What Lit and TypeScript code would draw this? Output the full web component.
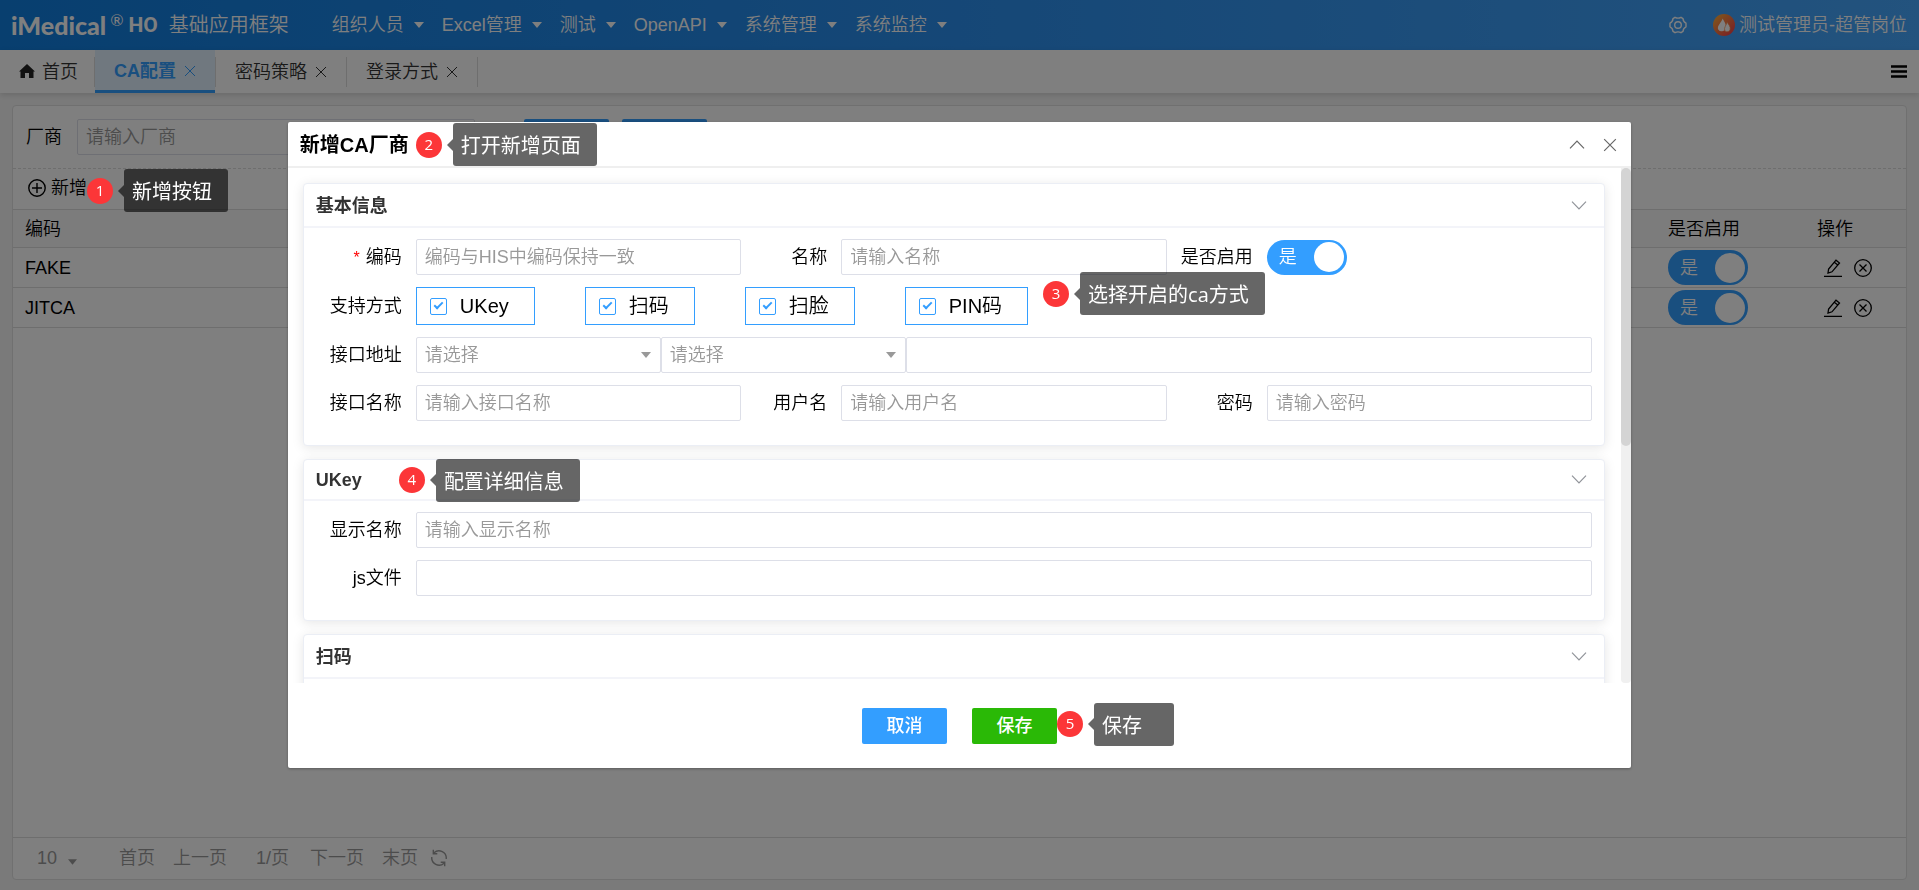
import { LitElement, html, css, nothing } from "lit";
import { customElement, property, state } from "lit/decorators.js";
import { classMap } from "lit/directives/class-map.js";

const caret = html`<svg class="caret" viewBox="0 0 10 6" aria-hidden="true"><path d="M0 0h10L5 6z" fill="currentColor"/></svg>`;
const cross = html`<svg class="cross" viewBox="0 0 12 12" aria-hidden="true"><path d="M1 1l10 10M11 1L1 11" stroke="currentColor" fill="none"/></svg>`;
const chevron = (up: boolean) => html`<svg class="chevron" viewBox="0 0 16 9" aria-hidden="true">
  <path d=${up ? "M1 8.3L8 1.2l7 7.1" : "M1 .7l7 7.1L15 .7"} stroke="currentColor" stroke-width="1.2" fill="none"/></svg>`;

@customElement("step-marker")
export class StepMarker extends LitElement {
  @property({ type: Number }) step = 1;
  @property() text = "";

  static styles = css`
    :host { position: absolute; z-index: 20; display: flex; align-items: center; pointer-events: none; }
    .badge {
      flex: none; width: 26px; height: 26px; border-radius: 50%; background: #fc3638; color: #fff;
      font: 15px/24px "Open Sans", "Noto Sans", sans-serif; text-align: center;
    }
    .tip {
      position: relative; margin-left: 11px; box-sizing: border-box; min-width: 80px; padding: 9px 16px 6px 8px;
      border-radius: 3px; background: rgba(0, 0, 0, 0.6); color: #fff; white-space: nowrap; text-align: left;
      font: 400 20px/28px "Open Sans", "Noto Sans CJK SC", sans-serif;
    }
    .tip::before {
      content: ""; position: absolute; right: 100%; top: 50%; margin-top: -6px;
      border: solid transparent; border-width: 6px 6px 6px 0; border-right-color: rgba(0, 0, 0, 0.6);
    }
  `;

  render() {
    return html`<span class="badge">${this.step}</span><span class="tip">${this.text}</span>`;
  }
}

interface Vendor { code: string; enabled: boolean; }

@customElement("app-root")
export class AppRoot extends LitElement {
  @state() private vendors: Vendor[] = [
    { code: "FAKE", enabled: true },
    { code: "JITCA", enabled: true },
  ];
  private menus = ["组织人员", "Excel管理", "测试", "OpenAPI", "系统管理", "系统监控"];
  private tabs = ["CA配置", "密码策略", "登录方式"];
  private modes = ["UKey", "扫码", "扫脸", "PIN码"];

  static styles = css`
    :host {
      display: flex; flex-direction: column; box-sizing: border-box; min-height: 100vh;
      background: #f5f5f5; color: #000;
      font: 350 18px/24px "Liberation Sans", "Noto Sans CJK SC", sans-serif;
    }
    *, *::before, *::after { box-sizing: border-box; }
    button, input, select { margin: 0; font: inherit; color: inherit; }
    button { padding: 0; border: 0; background: none; white-space: nowrap; cursor: pointer; }
    a { color: inherit; text-decoration: none; }
    svg { display: block; flex: none; }
    .caret { width: 10px; height: 6px; }
    .cross { width: 12px; height: 12px; }
    .chevron { width: 16px; height: 9px; }

    .topbar {
      display: flex; align-items: center; height: 50px; padding: 0 12px 0 11px; color: #fff;
      background: linear-gradient(90deg, #107edf 0%, #2b8fee 50%, #46a6fc 100%);
    }
    .brand { display: flex; align-items: center; }
    .logo { font: 900 25px/28px Lato, sans-serif; }
    .reg { align-self: flex-start; margin: 0 5px 0 4px; font: 16px/18px Lato, sans-serif; }
    .ho { font: 700 21px/28px Roboto, sans-serif; }
    .product { margin-left: 11px; font-size: 20px; }
    .menus { display: flex; align-items: center; gap: 18px; margin-left: 43px; }
    .menu { display: flex; align-items: center; gap: 10px; }
    .account { display: flex; align-items: center; gap: 4px; margin-left: auto; white-space: nowrap; }
    .gear { width: 18px; height: 18px; margin-right: 22px; }
    .avatar { width: 22px; height: 22px; }

    .tabbar {
      display: flex; align-items: center; height: 43px; padding-right: 12px; background: #fff;
      box-shadow: 0 2px 6px rgba(0, 0, 0, 0.14);
    }
    .tab { display: flex; align-items: center; gap: 8px; height: 43px; color: #333; padding: 0 19px; }
    .tab.active { color: #339eff; font-weight: 700; background: #e1f0ff; border-bottom: 3px solid #339eff; padding-top: 2px; }
    .tab.home { padding: 0 16px 0 19px; gap: 7px; }
    .tabbar .split { width: 1px; height: 30px; background: #ddd; }
    .home svg { width: 16px; height: 15px; color: #222; }
    .burger { margin-left: auto; }
    .burger svg { width: 16px; height: 13px; }

    .panel {
      flex: 1; display: flex; flex-direction: column; margin: 12px 12px 10px;
      border: 1px solid #e0e0e0; border-radius: 4px; background: #fff;
    }
    .search { display: flex; align-items: center; height: 63px; padding: 0 13px; border-bottom: 1px dashed #ddd; }
    .search .field { width: 398px; margin: 0 49px 0 15px; }
    .search .primary { margin-right: 13px; }
    .tools { display: flex; align-items: center; height: 40px; padding: 0 15px 2px; }
    .add { position: relative; display: flex; align-items: center; gap: 5px; }
    .add > svg { width: 18px; height: 18px; }
    .add step-marker { left: 100%; top: -7px; }

    table { width: 100%; border-collapse: collapse; }
    th { height: 38px; padding: 0 12px; background: #f9f9f9; font-weight: inherit; text-align: left; }
    td { height: 40px; padding: 0 12px; }
    th, td { border: solid #ddd; border-width: 1px 0; }
    .col-on { width: 149px; }
    .col-act { width: 101px; }
    td.acts { padding-left: 19px; }
    .row-acts { display: flex; align-items: center; gap: 12px; }
    .row-acts svg { width: 18px; height: 18px; }

    .pager {
      display: flex; align-items: center; height: 42px; margin-top: auto; padding: 0 24px 2px;
      border-top: 1px solid #ddd; color: #999;
    }
    .pager .size { display: grid; align-items: center; width: 40px; margin-right: 42px; }
    .pager select { grid-area: 1 / 1; width: 40px; padding: 0; border: 0; outline: 0; appearance: none; background: none; color: #999; }
    .pager .size .caret { grid-area: 1 / 1; justify-self: end; margin-top: 8px; width: 9px; }
    .pager button { margin-right: 18px; }
    .pager .now { margin: 0 21px 0 11px; }
    .pager .refresh { margin: 0 0 0 -6px; }
    .refresh svg { width: 18px; height: 18px; }

    .switch {
      display: inline-flex; align-items: center; justify-content: space-between; width: 80px; height: 35px;
      padding: 0 3px 0 12px; border-radius: 18px; background: #339eff; color: #fff; vertical-align: middle;
    }
    .switch input { appearance: none; width: 30px; height: 30px; border-radius: 50%; background: #fff; }

    .field {
      width: 100%; min-width: 0; height: 36px; padding: 0 8px; border: 1px solid #dddfe8; border-radius: 2px;
      outline: 0; background: #fff;
    }
    .field::placeholder { color: #999; opacity: 1; }
    .primary, .success { width: 85px; height: 36px; border-radius: 2px; background: #339eff; color: #fff; font-weight: 500; }
    .success { background: #2ab906; }

    .mask {
      position: fixed; inset: 0; z-index: 10; display: flex; align-items: center; justify-content: center;
      background: rgba(0, 0, 0, 0.5);
    }
    .dialog {
      display: flex; flex-direction: column; width: 70%; height: calc(100vh - 244px); border-radius: 2px; background: #fff;
      box-shadow: 0 1px 3px rgba(0, 0, 0, 0.3);
    }
    .dialog-head {
      display: flex; align-items: center; gap: 18px; height: 46px; padding: 1px 14px 0 12px; border-bottom: 2px solid #efefef; color: #666;
    }
    .dialog-title { position: relative; display: flex; align-items: center; margin: 0 auto 0 0; color: #000; font: inherit; font-size: 20px; font-weight: 700; }
    .dialog-title step-marker { left: calc(100% + 7px); }
    .dialog-head .cross { width: 14px; height: 14px; }
    .scroll { display: flex; flex: 1; min-height: 0; }
    .scroll-body { flex: 1; min-width: 0; overflow: hidden; padding: 15px 16px 0 15px; }
    .scroll-track { width: 10px; border-radius: 0 0 4px 4px; background: #f0f0f0; }
    .scroll-thumb { height: 54%; border-radius: 5px; background: #d4d4d4; }
    .card {
      margin-bottom: 13px; border: 1px solid #ebeef5; border-radius: 4px; background: #fff;
      box-shadow: 0 2px 12px rgba(0, 0, 0, 0.1);
    }
    .card-head {
      display: flex; align-items: center; justify-content: space-between; height: 44px; padding: 0 17px 0 12px;
      border-bottom: 2px solid #f3f4f9; color: #909399;
    }
    .card-head.slim { height: 41px; }
    .card-head h3 { position: relative; display: flex; align-items: center; margin: 0; padding-top: 1px; font: inherit; font-weight: 700; color: #333; }
    .card-head step-marker { left: calc(100% + 37px); }
    .form { display: grid; grid-template-columns: repeat(3, 1fr); row-gap: 12px; padding: 11px 12px 24px; }
    .item { display: flex; align-items: center; min-width: 0; }
    .wide { grid-column: 1 / -1; }
    .caption { flex: none; width: 100px; padding-right: 14px; text-align: right; white-space: nowrap; }
    .required::before { content: "*"; margin-right: 6px; color: #f00; font-size: 16px; }
    .modes { position: relative; display: flex; gap: 50px; }
    .modes step-marker { left: calc(100% + 15px); top: -15px; }
    .mode {
      display: flex; align-items: center; height: 38px; padding: 0 25px 0 13px; gap: 13px; border: 1px solid #339eff; font-size: 20px;
      white-space: nowrap;
    }
    .mode input {
      appearance: none; display: grid; place-items: center; width: 17px; height: 17px; border: 1px solid #339eff; border-radius: 2px;
    }
    .mode input::after {
      content: ""; width: 9px; height: 5px; margin-top: -3px; border: solid #339eff; border-width: 0 0 2px 2px; transform: rotate(-45deg);
    }
    .pick { display: grid; flex: none; width: 245px; align-items: center; color: #999; }
    .pick .field { grid-area: 1 / 1; appearance: none; color: #999; }
    .pick .caret { grid-area: 1 / 1; justify-self: end; margin-right: 10px; pointer-events: none; }
    .dialog-foot { display: flex; align-items: center; justify-content: center; gap: 25px; height: 85px; }
    .save { position: relative; display: flex; align-items: center; }
    .save step-marker { left: 100%; top: -5px; }
  `;

  private toggle(index: number) {
    this.vendors = this.vendors.map((v, i) => (i === index ? { ...v, enabled: !v.enabled } : v));
  }

  private renderTextItem(id: string, caption: string, placeholder: string, options: { required?: boolean; wide?: boolean; type?: string } = {}) {
    return html`<div class=${classMap({ item: true, wide: !!options.wide })}>
      <label class=${classMap({ caption: true, required: !!options.required })} for=${id}>${caption}</label>
      <input class="field" id=${id} type=${options.type ?? "text"} placeholder=${placeholder || nothing}>
    </div>`;
  }

  private renderHeader() {
    return html`
      <header class="topbar">
        <div class="brand">
          <span class="logo">iMedical</span><span class="reg">®</span><span class="ho">HO</span>
          <span class="product">基础应用框架</span>
        </div>
        <nav class="menus">${this.menus.map((m) => html`<a class="menu" href="#">${m}${caret}</a>`)}</nav>
        <div class="account">
          <svg class="gear" viewBox="0 0 18 18" fill="none" stroke="currentColor" stroke-width="1.4" stroke-linejoin="round">
            <path d="M6 1.300Q9 3 12 1.300L14 2.600Q14.200 5.800 17 7.200V10.800Q14.200 12.200 14 15.400L12 16.700Q9 15 6 16.700L4 15.400Q3.800 12.200 1 10.800V7.200Q3.800 5.800 4 2.600Z"/>
            <circle cx="9" cy="9" r="3.300"/>
          </svg>
          <svg class="avatar" viewBox="0 0 22 22">
            <defs><linearGradient id="flame" x1="0" y1="0" x2="1" y2="1">
              <stop offset="0" stop-color="#ffb638"/><stop offset="1" stop-color="#f4364c"/></linearGradient></defs>
            <circle cx="11" cy="11" r="11" fill="url(#flame)"/>
            <path d="M9.600 4.500C11 7 13 9.500 13 13a4.300 4.300 0 0 1-7.800 2.500C3.600 12 8.500 8.500 9.600 4.500z" fill="#fff"/>
            <path d="M14 8c1.200 2.200 4 4.500 3 7.800-.8 2.300-4.200 2.500-5.300.6C10.600 13.500 13.500 11.500 14 8z" fill="#fff" stroke="#f58a45" stroke-width=".7"/>
          </svg>
          <span>测试管理员-超管岗位</span>
        </div>
      </header>
      <nav class="tabbar">
        <a class="tab home" href="#"><svg viewBox="0 0 16 15"><path d="M8 0l8 7.500h-1.500V14H10V9H6v5H1.500V7.500H0z" fill="currentColor"/></svg>首页</a>
        <span class="split"></span>
        ${this.tabs.map((t, i) => html`<a class=${classMap({ tab: true, active: i === 0 })} href="#">${t}${cross}</a><span class="split"></span>`)}
        <button class="burger" aria-label="菜单"><svg viewBox="0 0 16 13"><path d="M0 1.500h16M0 6.500h16M0 11.500h16" stroke="#000" stroke-width="2.600"/></svg></button>
      </nav>`;
  }

  private renderPage() {
    return html`
      <main class="panel">
        <div class="search">
          <label for="vendor">厂商</label>
          <input class="field" id="vendor" type="text" placeholder="请输入厂商">
          <button class="primary" aria-label="查询"></button>
          <button class="primary" aria-label="清屏"></button>
        </div>
        <div class="tools">
          <button class="add"><svg viewBox="0 0 18 18" fill="none" stroke="currentColor" stroke-width="1.400"><circle cx="9" cy="9" r="8.200"/><path d="M9 4v10M4 9h10"/></svg><span>新增</span><step-marker step="1" text="新增按钮"></step-marker></button>
        </div>
        <table>
          <thead><tr><th>编码</th><th class="col-on">是否启用</th><th class="col-act">操作</th></tr></thead>
          <tbody>
            ${this.vendors.map((v, i) => html`<tr>
              <td>${v.code}</td>
              <td><label class="switch">是<input type="checkbox" .checked=${v.enabled} @change=${() => this.toggle(i)}></label></td>
              <td class="acts"><div class="row-acts">
                <button aria-label="编辑"><svg viewBox="0 0 18 18" fill="none" stroke="currentColor" stroke-width="1.300"><path d="M4 14l.6-4L12 1.200l3.500 2.800L8 12.800zM10.300 3.200l3.500 2.800M0 17.300h18"/></svg></button>
                <button aria-label="删除"><svg viewBox="0 0 18 18" fill="none" stroke="currentColor" stroke-width="1.300"><circle cx="9" cy="9" r="8.300"/><path d="M5.500 5.500l7 7M12.500 5.500l-7 7"/></svg></button>
              </div></td>
            </tr>`)}
          </tbody>
        </table>
        <footer class="pager">
          <span class="size"><select aria-label="每页条数"><option>10</option></select>${caret}</span>
          <button>首页</button><button>上一页</button><span class="now">1/页</span><button>下一页</button><button>末页</button>
          <button class="refresh" aria-label="刷新"><svg viewBox="0 0 18 18" fill="none" stroke="currentColor" stroke-width="1.400">
            <path d="M4 3.800A7.300 7.300 0 0 1 16.200 10M14 14.200A7.300 7.300 0 0 1 1.800 8M3.300.8v4h4M14.700 17.200v-4h-4"/></svg></button>
        </footer>
      </main>`;
  }

  private renderDialog() {
    return html`
      <div class="mask">
        <section class="dialog" role="dialog" aria-labelledby="dialog-title">
          <header class="dialog-head">
            <h2 class="dialog-title"><span id="dialog-title">新增CA厂商</span><step-marker step="2" text="打开新增页面"></step-marker></h2>
            <button aria-label="收起">${chevron(true)}</button>
            <button aria-label="关闭">${cross}</button>
          </header>
          <div class="scroll">
            <div class="scroll-body">
              <section class="card">
                <div class="card-head"><h3>基本信息</h3>${chevron(false)}</div>
                <div class="form">
                  ${this.renderTextItem("code", "编码", "编码与HIS中编码保持一致", { required: true })}
                  ${this.renderTextItem("name", "名称", "请输入名称")}
                  <div class="item">
                    <label class="caption" for="enabled">是否启用</label>
                    <span class="switch">是<input id="enabled" type="checkbox" checked></span>
                  </div>
                  <div class="item wide">
                    <span class="caption">支持方式</span>
                    <div class="modes">
                      ${this.modes.map((m) => html`<label class="mode"><input type="checkbox" checked>${m}</label>`)}
                      <step-marker step="3" text="选择开启的ca方式"></step-marker>
                    </div>
                  </div>
                  <div class="item wide">
                    <label class="caption" for="protocol">接口地址</label>
                    <span class="pick"><select class="field" id="protocol"><option>请选择</option></select>${caret}</span>
                    <span class="pick"><select class="field" aria-label="接口地址主机"><option>请选择</option></select>${caret}</span>
                    <input class="field" type="text" aria-label="接口地址路径">
                  </div>
                  ${this.renderTextItem("api", "接口名称", "请输入接口名称")}
                  ${this.renderTextItem("user", "用户名", "请输入用户名")}
                  ${this.renderTextItem("password", "密码", "请输入密码", { type: "password" })}
                </div>
              </section>
              <section class="card">
                <div class="card-head slim"><h3>UKey<step-marker step="4" text="配置详细信息"></step-marker></h3>${chevron(false)}</div>
                <div class="form">
                  ${this.renderTextItem("display", "显示名称", "请输入显示名称", { wide: true })}
                  ${this.renderTextItem("script", "js文件", "", { wide: true })}
                </div>
              </section>
              <section class="card">
                <div class="card-head"><h3>扫码</h3>${chevron(false)}</div>
                <div class="form"></div>
              </section>
            </div>
            <div class="scroll-track"><div class="scroll-thumb"></div></div>
          </div>
          <footer class="dialog-foot">
            <button class="primary">取消</button>
            <span class="save"><button class="success">保存</button><step-marker step="5" text="保存"></step-marker></span>
          </footer>
        </section>
      </div>`;
  }

  render() {
    return html`${this.renderHeader()}${this.renderPage()}${this.renderDialog()}`;
  }
}
